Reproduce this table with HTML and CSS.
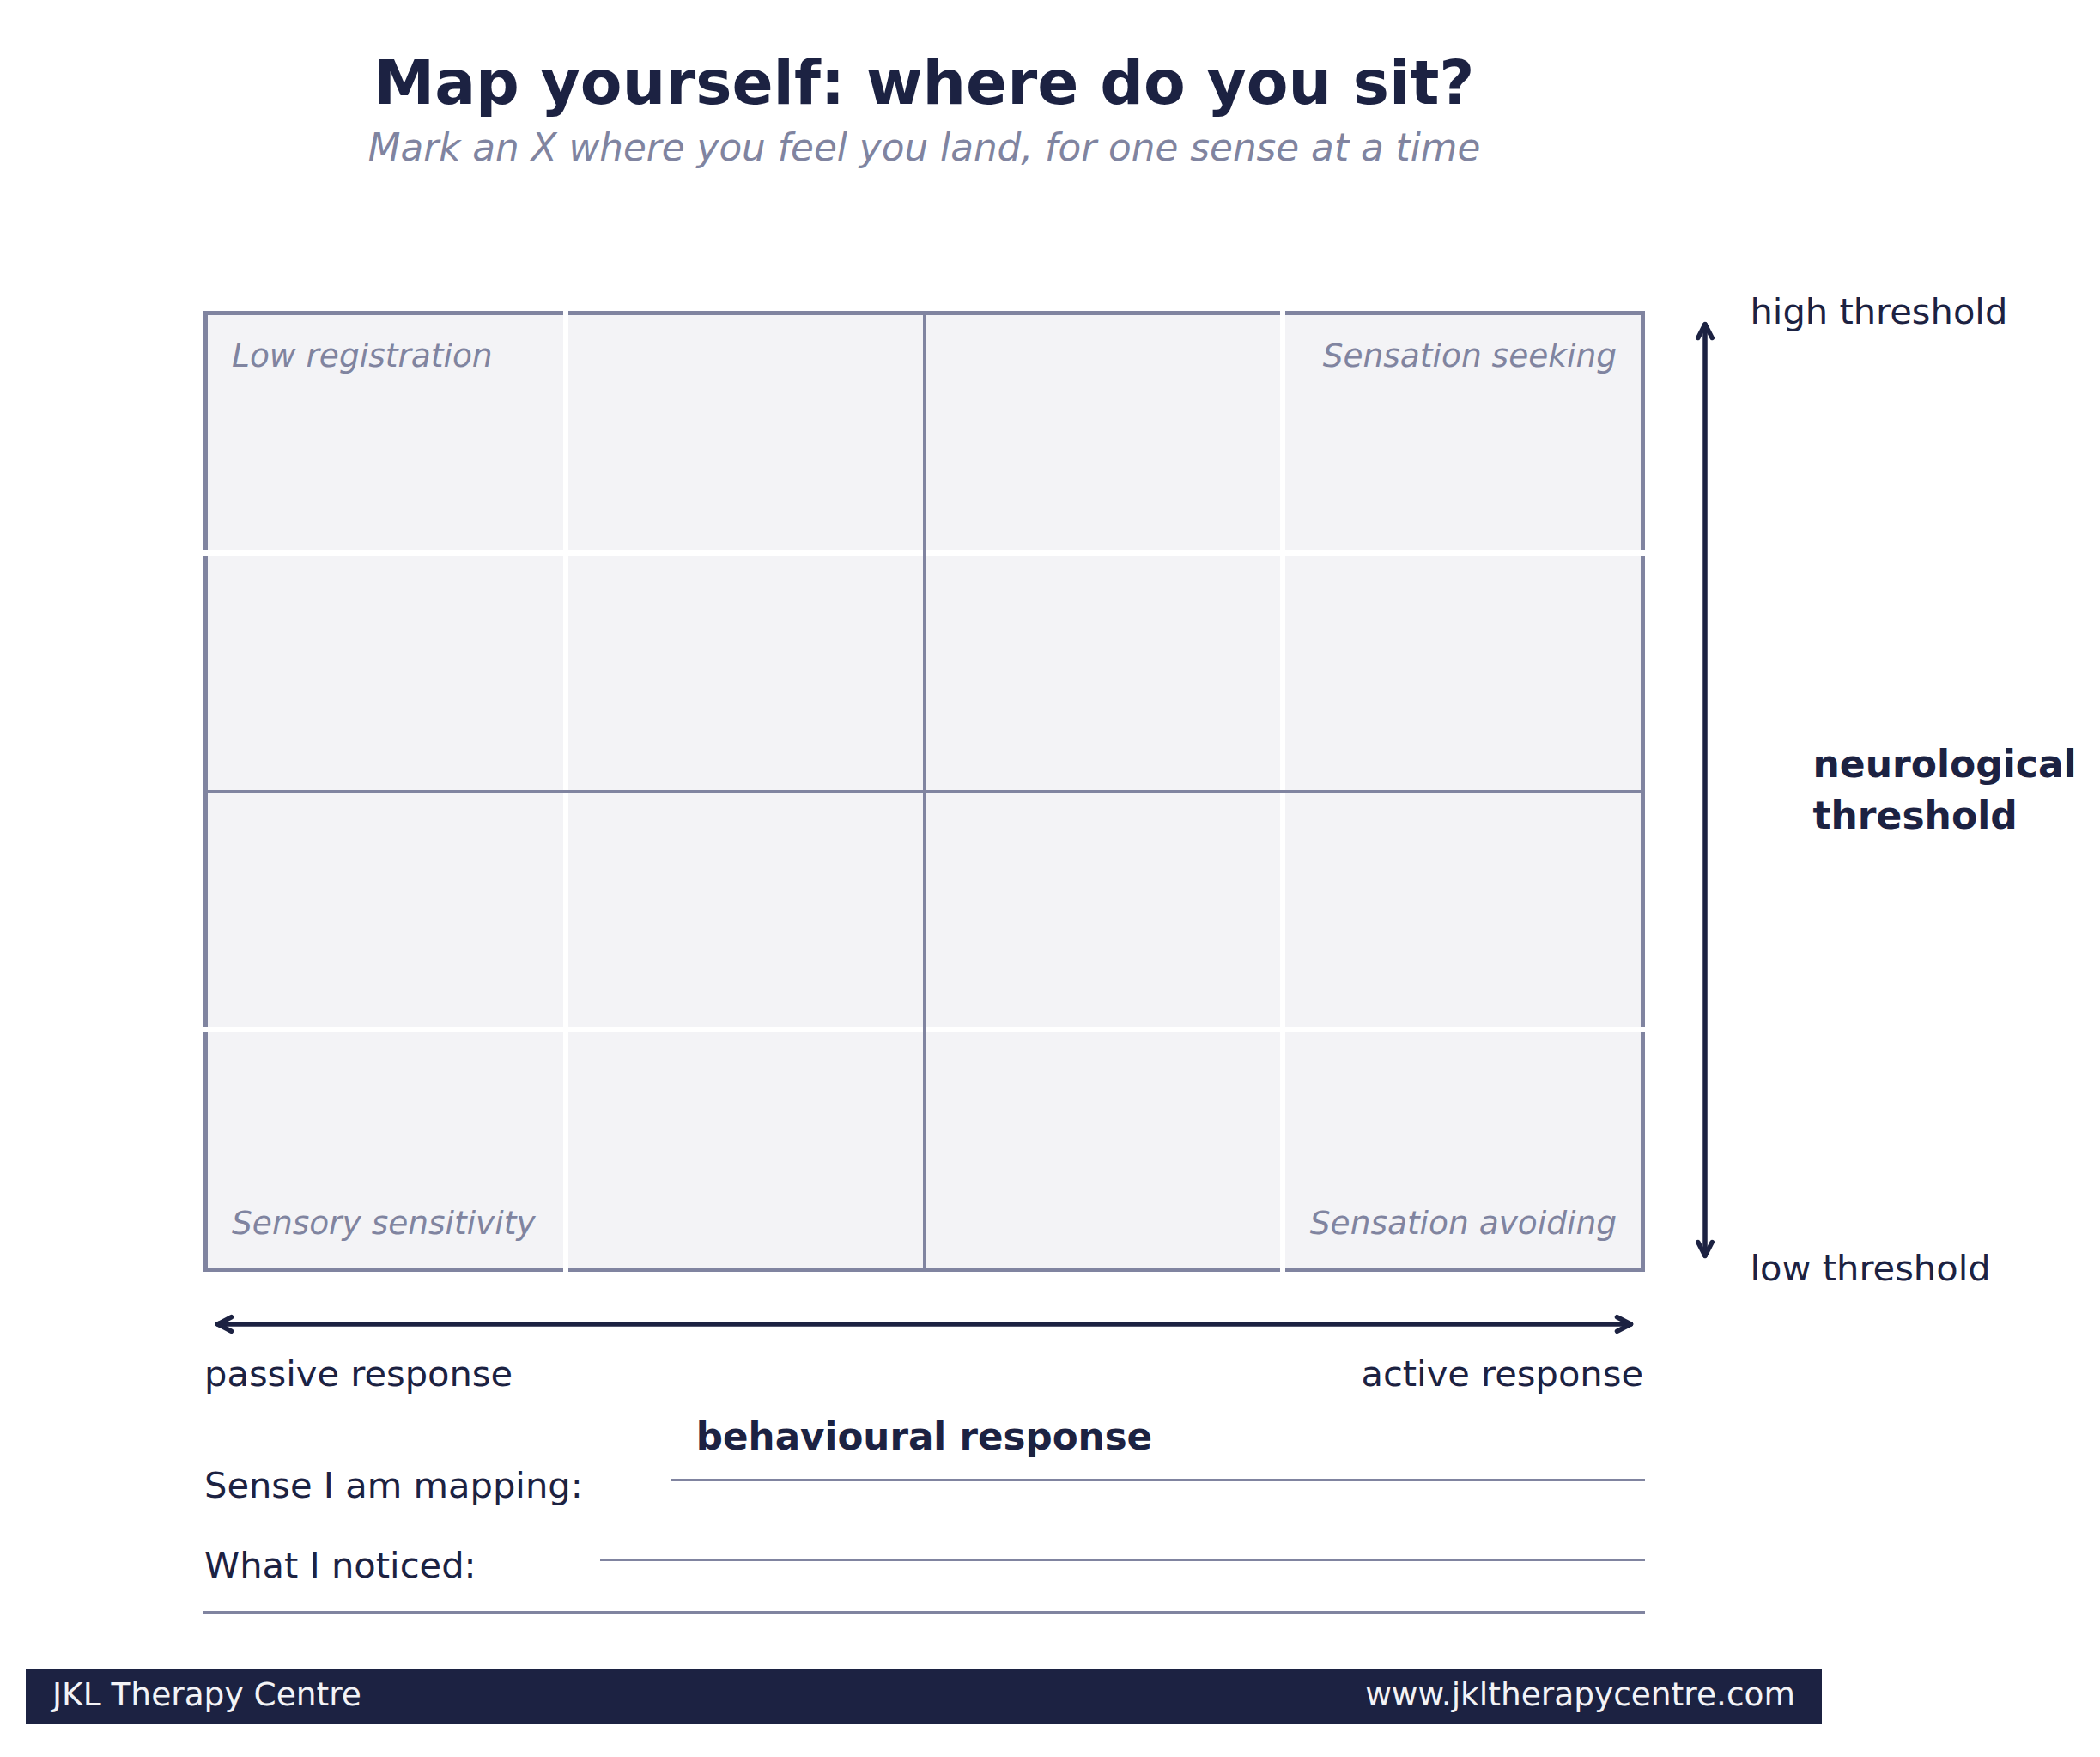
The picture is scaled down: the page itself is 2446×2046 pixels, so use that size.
FILE: index.html
```
<!DOCTYPE html>
<html lang="en">
<head>
<meta charset="utf-8">
<title>Map yourself</title>
<link rel="stylesheet" href="styles.css">
</head>
<body>
<div class="sheet">
  <header class="head">
    <h1 class="title">Map yourself: where do you sit?</h1>
    <p class="subtitle">Mark an X where you feel you land, for one sense at a time</p>
  </header>

  <section class="map">
    <div class="board">
      <div class="quad quad-tl"><span class="quad-label">Low registration</span></div>
      <div class="quad quad-tr"><span class="quad-label">Sensation seeking</span></div>
      <div class="quad quad-bl"><span class="quad-label">Sensory sensitivity</span></div>
      <div class="quad quad-br"><span class="quad-label">Sensation avoiding</span></div>
      <span class="rule rule-v rule-q1"></span>
      <span class="rule rule-v rule-q3"></span>
      <span class="rule rule-h rule-q1h"></span>
      <span class="rule rule-h rule-q3h"></span>
      <span class="rule rule-mid-v"></span>
      <span class="rule rule-mid-h"></span>
    </div>
    <div class="v-axis">
      <svg viewBox="0 0 24 1119" width="24" height="1119" aria-hidden="true">
        <g fill="none" stroke="#1c2242" stroke-width="5.5" stroke-linecap="round" stroke-linejoin="round">
          <line x1="12" y1="16" x2="12" y2="1100"/>
          <polyline points="3.8,31.5 12,15.5 20.2,31.5"/>
          <polyline points="3.8,1084.5 12,1100.5 20.2,1084.5"/>
        </g>
      </svg>
    </div>
    <div class="v-labels">
      <div class="v-label">high threshold</div>
      <div class="v-title">neurological<br>threshold</div>
      <div class="v-label">low threshold</div>
    </div>
  </section>

  <section class="below">
    <svg class="h-arrow" viewBox="0 0 1679 24" width="1679" height="24" aria-hidden="true">
      <g fill="none" stroke="#1c2242" stroke-width="5.5" stroke-linecap="round" stroke-linejoin="round">
        <line x1="16.5" y1="12" x2="1662.5" y2="12"/>
        <polyline points="32.5,3.7 16.5,12 32.5,20.3"/>
        <polyline points="1646.5,3.7 1662.5,12 1646.5,20.3"/>
      </g>
    </svg>
    <div class="h-labels">
      <span>passive response</span>
      <span>active response</span>
    </div>
    <div class="h-title">behavioural response</div>
    <div class="field field-sense">
      <span class="field-label">Sense I am mapping:</span>
      <span class="field-line"></span>
    </div>
    <div class="field field-notes">
      <span class="field-label">What I noticed:</span>
      <span class="field-line"></span>
    </div>
    <div class="field-line field-line-full"></div>
  </section>

  <footer class="footer">
    <span>JKL Therapy Centre</span>
    <span>www.jkltherapycentre.com</span>
  </footer>
</div>
</body>
</html>
```

FILE: styles.css
```
html, body {
  margin: 0;
  padding: 0;
  background: #ffffff;
}

body {
  width: 2446px;
  height: 2046px;
  overflow: hidden;
  font-family: "DejaVu Sans", "Noto Sans", sans-serif;
  color: #1c2242;
}

/* header */
.head {
  width: 1679px;
  margin-left: 237px;
  padding-top: 55px;
  text-align: center;
}

.title {
  margin: 0;
  font-size: 71px;
  font-weight: bold;
  line-height: 84px;
  color: #1c2242;
}

.subtitle {
  margin: 7px 0 0;
  font-size: 43.7px;
  font-style: italic;
  line-height: 52px;
  color: #8084a0;
}

/* map row */
.map {
  display: flex;
  margin-left: 237px;
  margin-top: 164px;
}

.board {
  position: relative;
  flex: none;
  box-sizing: border-box;
  width: 1679px;
  height: 1119px;
  border: 5px solid #8084a0;
  background: #f3f3f6;
  display: grid;
  grid-template-columns: 1fr 1fr;
  grid-template-rows: 1fr 1fr;
}

.quad {
  display: flex;
  padding: 25px 28px 30px 28px;
}

.quad-tl { align-items: flex-start; justify-content: flex-start; }
.quad-tr { align-items: flex-start; justify-content: flex-end; }
.quad-bl { align-items: flex-end; justify-content: flex-start; }
.quad-br { align-items: flex-end; justify-content: flex-end; }

.quad-label {
  font-size: 37.5px;
  font-style: italic;
  line-height: 44px;
  color: #8084a0;
  white-space: nowrap;
}

.rule {
  position: absolute;
}

.rule-v {
  top: -5px;
  bottom: -5px;
  width: 6px;
  background: #ffffff;
}

.rule-q1 { left: calc(25% - 3px); }
.rule-q3 { left: calc(75% - 3px); }

.rule-h {
  left: -5px;
  right: -5px;
  height: 6px;
  background: #ffffff;
}

.rule-q1h { top: calc(25% - 3px); }
.rule-q3h { top: calc(75% - 3px); }

.rule-mid-v {
  top: 0;
  bottom: 0;
  left: calc(50% - 1.5px);
  width: 3px;
  background: #8084a0;
}

.rule-mid-h {
  left: 0;
  right: 0;
  top: calc(50% - 1.5px);
  height: 3px;
  background: #8084a0;
}

/* vertical axis */
.v-axis {
  flex: none;
  width: 24px;
  margin-left: 58px;
}

.v-axis svg {
  display: block;
}

.v-labels {
  flex: none;
  margin-left: 40.5px;
  margin-top: -24.5px;
  margin-bottom: -20.5px;
  display: grid;
  grid-template-rows: auto 1fr auto;
}

.v-label {
  font-size: 41.6px;
  line-height: 50px;
  white-space: nowrap;
}

.v-title {
  align-self: center;
  margin-left: 73px;
  font-size: 44px;
  font-weight: bold;
  line-height: 60px;
  white-space: nowrap;
}

/* below the board */
.below {
  width: 1679px;
  margin-left: 237px;
  margin-top: 49px;
}

.h-arrow {
  display: block;
}

.h-labels {
  display: flex;
  justify-content: space-between;
  margin-top: 20.5px;
  padding: 0 2px 0 1px;
  font-size: 41.6px;
  line-height: 50px;
}

.h-title {
  margin-top: 22px;
  text-align: center;
  font-size: 43.6px;
  font-weight: bold;
  line-height: 52px;
}

.field {
  display: flex;
  align-items: flex-start;
  font-size: 41.6px;
  line-height: 50px;
}

.field-label {
  flex: none;
  padding-left: 1px;
  white-space: nowrap;
}

.field-sense { margin-top: 6px; }
.field-sense .field-label { width: 544px; }

.field-notes { margin-top: 43px; }
.field-notes .field-label { width: 461px; }

.field-line {
  flex: 1;
  height: 3px;
  margin-top: 17px;
  background: #8084a0;
}

.field-line-full {
  margin-top: 28.5px;
}

/* footer */
.footer {
  box-sizing: border-box;
  width: 2092px;
  height: 65px;
  margin-left: 30px;
  margin-top: 64px;
  padding: 9px 31px 0;
  display: flex;
  justify-content: space-between;
  background: #1c2242;
  color: #f3f3f6;
  font-size: 37.5px;
  line-height: 43px;
}
```
